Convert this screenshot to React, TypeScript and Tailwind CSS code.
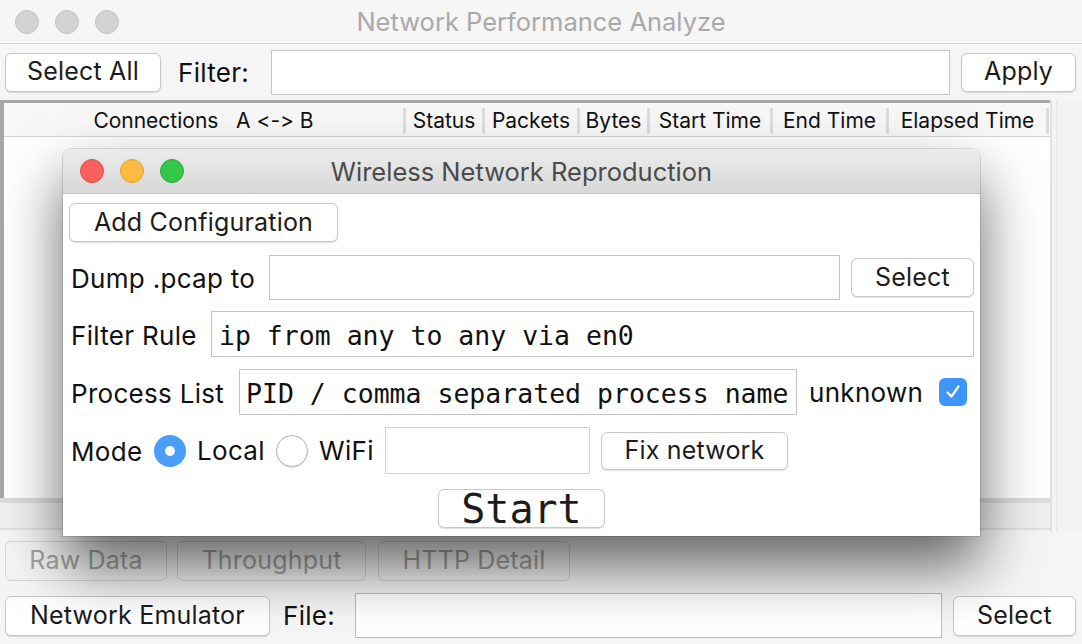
import React from 'react';
import clsx from 'clsx';

const sans = "font-['Inter',sans-serif] [font-feature-settings:'calt'_0]";
const mono = "font-['DejaVu_Sans_Mono',monospace]";

function Btn({ children, className, disabled }: { children: React.ReactNode; className?: string; disabled?: boolean }) {
    return (
        <div
            className={clsx(
                'flex shrink-0 items-center justify-center whitespace-nowrap rounded-[6px] border text-[25px] tracking-[0.2px]',
                disabled
                    ? 'border-[#d4d4d4] bg-transparent text-[#a3a3a3]'
                    : 'border-[#c8c8c8] bg-white text-[#1c1c1c] shadow-[0_1px_1px_rgba(0,0,0,0.12)]',
                className
            )}
        >
            {children}
        </div>
    );
}

function Lights({ active }: { active?: boolean }) {
    const colors = active
        ? ['bg-[#fc605c] border-[#de4a46]', 'bg-[#fdbc40] border-[#dea235]', 'bg-[#34c84a] border-[#27aa37]']
        : ['bg-[#d3d3d3] border-[#c3c3c3]', 'bg-[#d3d3d3] border-[#c3c3c3]', 'bg-[#d3d3d3] border-[#c3c3c3]'];
    return (
        <div className="flex gap-[16px]">
            {colors.map((c, i) => (
                <div key={i} className={clsx('h-[24px] w-[24px] rounded-full border', c)} />
            ))}
        </div>
    );
}

const columns = [
    { label: 'Connections   A <-> B', w: 'w-[399px]' },
    { label: 'Status', w: 'w-[76px]' },
    { label: 'Packets', w: 'w-[92px]' },
    { label: 'Bytes', w: 'w-[67px]' },
    { label: 'Start Time', w: 'w-[120px]' },
    { label: 'End Time', w: 'w-[113px]' },
    { label: 'Elapsed Time', w: 'w-[157px]' },
];

function Dialog() {
    return (
        <div className="absolute left-[63px] top-[149px] flex h-[387px] w-[917px] flex-col overflow-hidden rounded-t-[8px] bg-white shadow-[0_30px_60px_rgba(0,0,0,0.6),0_0_0_1px_rgba(0,0,0,0.12)]">
            {/* title bar */}
            <div className="relative flex h-[45px] shrink-0 items-center border-b border-[#c4c4c4] bg-gradient-to-b from-[#ececec] to-[#d8d8d8] pl-[17px]">
                <Lights active />
                <div className="absolute inset-0 flex items-center justify-center pt-[3px] text-[25.5px] text-[#4b4b4b]">
                    Wireless Network Reproduction
                </div>
            </div>

            <div className="flex flex-col px-[6px] pt-[9px] text-[26px] tracking-[0.3px] text-[#111]">
                <Btn className="h-[39px] w-[269px]">Add Configuration</Btn>

                <div className="mt-[13px] flex h-[45px] items-center">
                    <span className="ml-[2px] w-[186px] shrink-0 whitespace-nowrap pt-[2px]">Dump .pcap to</span>
                    <div className="ml-[12px] h-[45px] w-[572px] border border-[#c4c4c4]" />
                    <Btn className="ml-[11px] h-[39px] w-[123px]">Select</Btn>
                </div>

                <div className="mt-[11px] flex h-[46px] items-center">
                    <span className="ml-[2px] w-[128px] shrink-0 whitespace-nowrap pt-[2px]">Filter Rule</span>
                    <div className={clsx('ml-[12px] flex h-[46px] flex-1 items-center border border-[#c4c4c4] pl-[7px] pt-[3px] text-[26.5px] tracking-normal', mono)}>
                        ip from any to any via en0
                    </div>
                </div>

                <div className="mt-[12px] flex h-[46px] items-center">
                    <span className="ml-[2px] w-[156px] shrink-0 whitespace-nowrap pt-[2px]">Process List</span>
                    <div className={clsx('ml-[12px] flex h-[46px] w-[558px] shrink-0 items-center overflow-hidden whitespace-nowrap border border-[#c4c4c4] pl-[6px] pt-[3px] text-[26.5px] tracking-normal', mono)}>
                        PID / comma separated process name
                    </div>
                    <span className="ml-[12px] w-[113px] shrink-0 whitespace-nowrap">unknown</span>
                    <div className="ml-[17px] flex h-[28px] w-[28px] shrink-0 items-center justify-center rounded-[6px] bg-[#3e96f8]">
                        <svg width="18" height="18" viewBox="0 0 18 18">
                            <path d="M3.5 9.5 L7.5 13.5 L14.5 3.5" fill="none" stroke="white" strokeWidth="2.2" strokeLinecap="round" strokeLinejoin="round" />
                        </svg>
                    </div>
                </div>

                <div className="mt-[12px] flex h-[47px] items-center">
                    <span className="ml-[2px] w-[70px] shrink-0 pt-[2px]">Mode</span>
                    <div className="ml-[13px] flex h-[32px] w-[32px] shrink-0 items-center justify-center rounded-full bg-[#4a9df8]">
                        <div className="h-[10px] w-[10px] rounded-full bg-white" />
                    </div>
                    <span className="ml-[11px] w-[63px] shrink-0">Local</span>
                    <div className="ml-[16px] h-[32px] w-[32px] shrink-0 rounded-full border border-[#b4b4b4] bg-white shadow-[0_1px_1px_rgba(0,0,0,0.12)]" />
                    <span className="ml-[11px] w-[52px] shrink-0">WiFi</span>
                    <div className="ml-[14px] h-[47px] w-[205px] shrink-0 border border-[#d2d2d2]" />
                    <Btn className="ml-[11px] h-[38px] w-[187px]">Fix network</Btn>
                </div>

                <div className="mt-[15px] flex justify-center">
                    <Btn className={clsx('h-[39px] w-[167px] !text-[40px] leading-none !tracking-normal', mono)}>Start</Btn>
                </div>
            </div>
        </div>
    );
}

export default function App() {
    return (
        <div className={clsx('relative h-[644px] w-[1082px] overflow-hidden bg-[#f5f5f5] text-[#111]', sans)}>
            {/* main title bar */}
            <div className="relative flex h-[44px] items-center border-b border-[#d2d2d2] bg-[#f6f6f6] pl-[15px]">
                <Lights />
                <div className="absolute inset-0 flex items-center justify-center pt-[2px] text-[25.5px] text-[#a9a9a9]">
                    Network Performance Analyze
                </div>
            </div>

            {/* toolbar */}
            <div className="flex h-[56px] items-center px-[5px] text-[26px] tracking-[0.3px]">
                <Btn className="h-[39px] w-[156px]">Select All</Btn>
                <span className="ml-[17px] w-[93px] shrink-0">Filter:</span>
                <div className="h-[45px] w-[679px] shrink-0 border border-[#c4c4c4] bg-white" />
                <Btn className="ml-[11px] h-[39px] w-[115px]">Apply</Btn>
            </div>

            {/* table area */}
            <div className="flex h-[432px]">
                <div className="flex w-[1050px] flex-col">
                    <div className="flex h-[398px] flex-col border-l-[4px] border-t-[3px] border-[#a7a7a7] bg-white">
                        <div className="flex h-[34px] items-center border-b border-[#d4d4d4] bg-[#f7f7f7] pt-[3px] text-[21px]">
                            {columns.map((c) => (
                                <div key={c.label} className="flex items-center">
                                    <div className={clsx('whitespace-pre text-center', c.w)}>{c.label}</div>
                                    <div className="h-[26px] w-[3px] bg-[#dcdcdc]" />
                                </div>
                            ))}
                        </div>
                        <div className="flex-1" />
                    </div>
                    <div className="h-[5px] bg-[#dcdcdc]" />
                    <div className="h-[27px] border-b-[2px] border-[#e0e0e0] bg-[#f0f0f0]" />
                </div>
                <div className="flex w-[32px] border-l-[2px] border-[#e2e2e2] bg-[#f3f3f3]">
                    <div className="ml-[4px] w-[1px] bg-[#e6e6e6]" />
                </div>
            </div>

            {/* tabs row */}
            <div className="mt-[9px] flex h-[40px] items-center px-[5px]">
                <Btn disabled className="h-[40px] w-[162px]">Raw Data</Btn>
                <Btn disabled className="ml-[10px] h-[40px] w-[189px]">Throughput</Btn>
                <Btn disabled className="ml-[12px] h-[40px] w-[192px]">HTTP Detail</Btn>
            </div>

            {/* emulator row */}
            <div className="mt-[12px] flex h-[45px] items-center px-[5px] text-[26px] tracking-[0.3px]">
                <Btn className="h-[40px] w-[265px]">Network Emulator</Btn>
                <span className="ml-[13px] w-[72px] shrink-0">File:</span>
                <div className="h-[45px] w-[587px] shrink-0 border border-[#bcbcbc] bg-white" />
                <Btn className="ml-[11px] h-[40px] w-[123px]">Select</Btn>
            </div>

            <Dialog />
        </div>
    );
}
